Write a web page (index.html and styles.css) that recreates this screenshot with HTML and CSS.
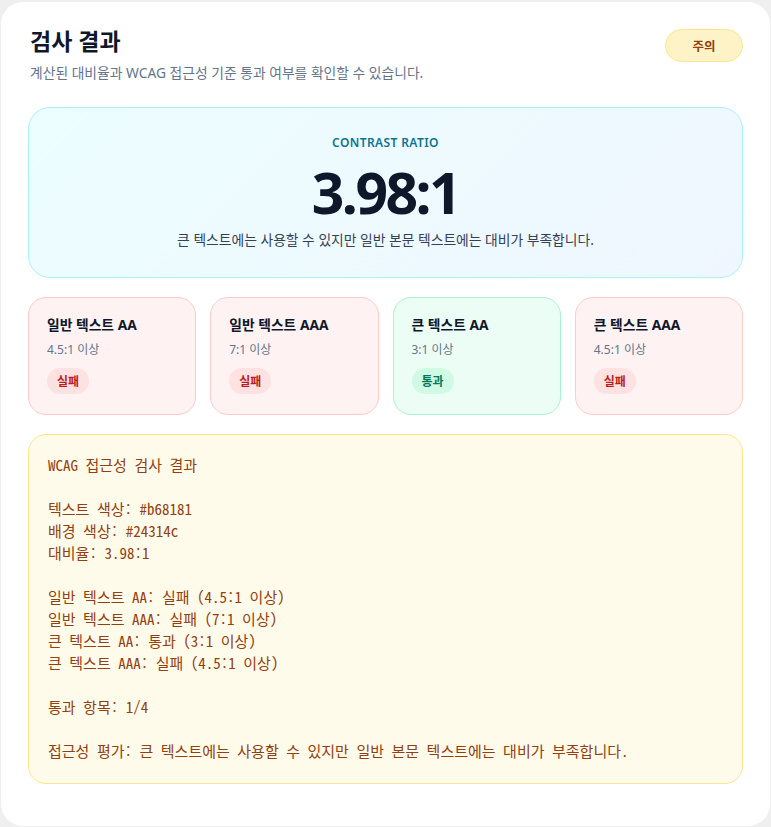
FILE: index.html
```html
<!DOCTYPE html>
<html lang="ko">
<head>
  <meta charset="UTF-8" />
  <meta name="viewport" content="width=device-width, initial-scale=1.0" />
  <title>검사 결과</title>
  <link rel="stylesheet" href="styles.css">
</head>
<body>

  <div class="panel">
    <!-- Header -->
    <div class="panel-head">
      <div class="head-text">
        <h1>검사 결과</h1>
        <p class="sub">계산된 대비율과 WCAG 접근성 기준 통과 여부를 확인할 수 있습니다.</p>
      </div>
      <span class="badge">주의</span>
    </div>

    <!-- Ratio -->
    <div class="hero">
      <div class="hero-label">CONTRAST RATIO</div>
      <div class="hero-value">3.98:1</div>
      <div class="hero-desc">큰 텍스트에는 사용할 수 있지만 일반 본문 텍스트에는 대비가 부족합니다.</div>
    </div>

    <!-- Levels -->
    <div class="levels">
      <div class="level fail">
        <div class="level-title">일반 텍스트 AA</div>
        <div class="level-req">4.5:1 이상</div>
        <span class="pill">실패</span>
      </div>
      <div class="level fail">
        <div class="level-title">일반 텍스트 AAA</div>
        <div class="level-req">7:1 이상</div>
        <span class="pill">실패</span>
      </div>
      <div class="level pass">
        <div class="level-title">큰 텍스트 AA</div>
        <div class="level-req">3:1 이상</div>
        <span class="pill">통과</span>
      </div>
      <div class="level fail">
        <div class="level-title">큰 텍스트 AAA</div>
        <div class="level-req">4.5:1 이상</div>
        <span class="pill">실패</span>
      </div>
    </div>

    <!-- Report -->
    <pre class="report">WCAG 접근성 검사 결과

텍스트 색상: #b68181
배경 색상: #24314c
대비율: 3.98:1

일반 텍스트 AA: 실패 (4.5:1 이상)
일반 텍스트 AAA: 실패 (7:1 이상)
큰 텍스트 AA: 통과 (3:1 이상)
큰 텍스트 AAA: 실패 (4.5:1 이상)

통과 항목: 1/4

접근성 평가: 큰 텍스트에는 사용할 수 있지만 일반 본문 텍스트에는 대비가 부족합니다.</pre>
  </div>

</body>
</html>
```

FILE: styles.css
```css
body {
  background-color: #efefef;
  font-family: "Noto Sans", "Noto Sans CJK KR", sans-serif;
  margin: 0;
  padding: 2px 1px 2px 1px;
  color: #0f172a;
}

.panel {
  background: white;
  border-radius: 22px;
  padding: 25px 27px 42px 27px;
  min-height: 756px;
}

.panel-head {
  display: flex;
  justify-content: space-between;
  align-items: flex-start;
}

.head-text {
  padding-left: 2px;
}

h1 {
  font-size: 23px;
  font-weight: 700;
  margin: 0;
  line-height: 28px;
}

.sub {
  font-size: 13.8px;
  color: #64748b;
  margin: 8px 0 0;
  line-height: 20px;
}

.badge {
  margin-top: 2px;
  width: 78px;
  height: 33px;
  box-sizing: border-box;
  display: flex;
  justify-content: center;
  align-items: center;
  background-color: #fef3c7;
  border: 1px solid #fde68a;
  border-radius: 999px;
  color: #92400e;
  font-size: 12.5px;
  font-weight: 700;
}

.hero {
  margin-top: 24px;
  height: 171px;
  box-sizing: border-box;
  border: 1px solid #a5f3fc;
  border-radius: 22px;
  background: linear-gradient(135deg, #ecfeff, #eff6ff);
  display: flex;
  flex-direction: column;
  align-items: center;
  padding-top: 26px;
}

.hero-label {
  font-size: 12px;
  line-height: 17px;
  font-weight: 600;
  color: #0e7490;
  letter-spacing: 0.4px;
}

.hero-value {
  font-size: 57px;
  font-weight: 700;
  letter-spacing: -2.5px;
  line-height: 64px;
  margin-top: 9px;
}

.hero-desc {
  font-size: 13.8px;
  line-height: 19px;
  color: #334155;
  margin-top: 6px;
}

.levels {
  display: grid;
  grid-template-columns: repeat(4, 1fr);
  gap: 14px;
  margin-top: 19px;
}

.level {
  height: 118px;
  box-sizing: border-box;
  border-radius: 18px;
  border: 1px solid;
  padding: 17px 18px;
  display: flex;
  flex-direction: column;
  align-items: flex-start;
}

.level.fail {
  background-color: #fef2f2;
  border-color: #fecaca;
}

.level.pass {
  background-color: #ecfdf5;
  border-color: #a7f3d0;
}

.level-title {
  font-size: 13.8px;
  font-weight: 700;
  line-height: 19px;
}

.level-req {
  font-size: 12px;
  color: #64748b;
  margin-top: 6px;
}

.pill {
  margin-top: 10px;
  height: 26px;
  padding: 0 10px;
  display: flex;
  align-items: center;
  border-radius: 999px;
  font-size: 12px;
  font-weight: 700;
}

.fail .pill {
  background-color: #fee2e2;
  color: #b91c1c;
}

.pass .pill {
  background-color: #d1fae5;
  color: #047857;
}

.report {
  margin: 19px 0 0;
  background-color: #fffbeb;
  border: 1px solid #fde68a;
  border-radius: 18px;
  padding: 19px 19px 21px;
  font-family: "Noto Sans Mono CJK KR", "DejaVu Sans Mono", monospace;
  font-size: 15px;
  line-height: 22px;
  color: #92400e;
  white-space: pre-wrap;
}
```
